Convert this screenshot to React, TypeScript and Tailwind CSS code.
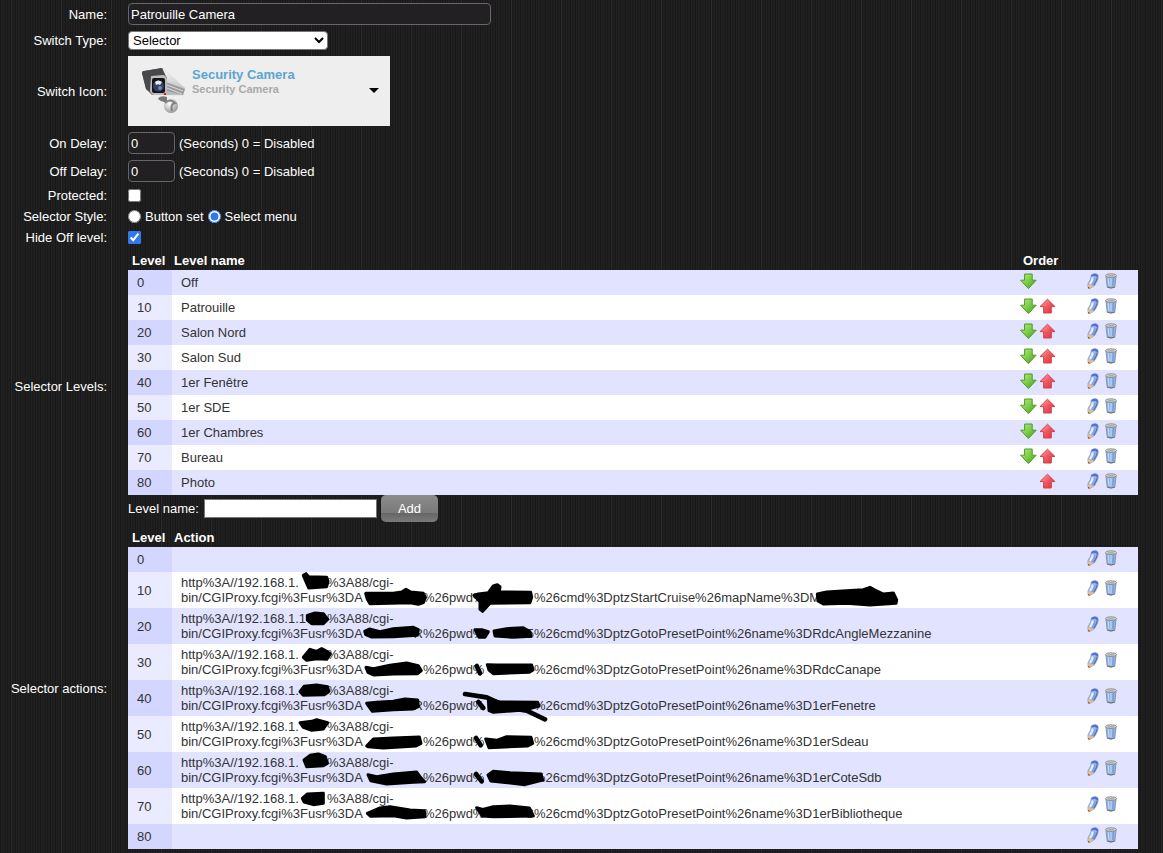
import React, { useState } from 'react';

type Blot = { points?: string; line?: string; width?: number };
type Action = { level: number; octet?: string; user?: string; pass?: string; preset?: string; command?: string; blots?: Blot[] };

const levels = ['Off', 'Patrouille', 'Salon Nord', 'Salon Sud', '1er Fenêtre', '1er SDE', '1er Chambres', 'Bureau', 'Photo'];

const GOTO = '%26cmd%3DptzGotoPresetPoint%26name%3D';

// Marker strokes that hide credentials, in thirds of a pixel from the cell's corner.
const actions: Action[] = [
  { level: 0 },
  {
    level: 10,
    command: '%26cmd%3DptzStartCruise%26mapName%3DM',
    blots: [
      { points: '430,10 438,5 446,14 500,16 504,28 500,44 446,48 440,34' },
      { points: '617,64 700,64 725,60 738,52 752,60 790,64 796,76 790,92 775,97 750,92 630,95 622,82' },
      { points: '942,70 955,66 985,62 1000,42 1012,38 1020,44 1018,60 1112,61 1115,76 1110,92 990,94 968,118 960,112 960,90' },
      { points: '1972,66 2000,60 2060,56 2110,53 2130,46 2145,54 2170,66 2200,63 2210,84 2208,94 2130,99 2060,94 1990,96 1974,87' },
    ],
  },
  {
    level: 20,
    octet: '1',
    user: 'R',
    pass: '5',
    command: GOTO + 'RdcAngleMezzanine',
    blots: [
      { points: '442,22 465,15 490,17 503,34 490,47 455,47 442,36' },
      { points: '614,70 628,63 660,71 700,62 760,58 775,65 772,82 700,86 635,87 617,80' },
      { points: '945,65 965,65 985,71 975,88 957,88' },
      { points: '1002,69 1040,62 1090,59 1110,71 1112,85 1060,88 1005,84' },
    ],
  },
  {
    level: 30,
    command: GOTO + 'RdcCanape',
    blots: [
      { points: '430,40 450,16 470,22 485,14 500,22 511,30 500,46 470,44 440,49' },
      { points: '618,70 640,74 690,64 740,57 775,65 784,80 773,89 700,90 640,93 624,85' },
      { line: 'M950 66 L960 88', width: 14 },
      { points: '982,62 1010,63 1115,63 1119,78 1108,85 1000,89 987,78' },
    ],
  },
  {
    level: 40,
    user: 'R',
    command: GOTO + '1erFenetre',
    blots: [
      { points: '420,35 432,19 470,15 503,20 506,35 493,44 430,46' },
      { points: '620,70 650,67 700,64 735,57 773,60 775,80 760,87 700,89 637,94' },
      { line: 'M915 42 L980 52 L1050 84 L1100 92 L1155 118', width: 14 },
      { line: 'M955 66 L970 84', width: 14 },
      { points: '985,58 1020,66 1133,67 1137,78 1100,89 1000,97 987,92' },
    ],
  },
  {
    level: 50,
    command: GOTO + '1erSdeau',
    blots: [
      { points: '420,20 455,16 470,11 503,20 490,39 455,43 430,34' },
      { points: '620,90 640,69 700,66 778,63 783,82 768,90 670,96 624,92' },
      { line: 'M948 66 L962 88', width: 14 },
      { points: '977,69 1010,73 1040,62 1113,64 1118,82 1103,90 987,95' },
    ],
  },
  {
    level: 60,
    command: GOTO + '1erCoteSdb',
    blots: [
      { points: '432,24 450,10 475,6 496,14 502,34 490,41 440,44' },
      { points: '624,68 650,74 700,66 770,60 780,74 794,89 760,91 680,96 632,86' },
      { line: 'M948 66 L965 88', width: 14 },
      { points: '984,69 1000,58 1050,62 1143,66 1148,84 1095,98 992,87' },
    ],
  },
  {
    level: 70,
    pass: 'S',
    command: GOTO + '1erBibliotheque',
    blots: [
      { points: '427,31 442,18 490,16 490,46 460,50 432,42' },
      { points: '622,76 660,60 690,56 750,66 793,68 795,86 740,90 700,83 632,85' },
      { points: '950,59 968,64 1000,56 1050,54 1108,60 1120,84 1000,86 967,84' },
    ],
  },
  { level: 80 },
];

function ArrowIcon({ up }: { up?: boolean }) {
  return (
    <svg width="17" height="17" viewBox="0 0 17 17" aria-hidden="true" className="block">
      <defs>
        <linearGradient id={up ? 'gu' : 'gd'} x1="0" y1="0" x2="1" y2="1">
          <stop offset="0" stopColor={up ? '#ffb0b0' : '#b9ec8c'} />
          <stop offset="0.5" stopColor={up ? '#f2565f' : '#7ccc44'} />
          <stop offset="1" stopColor={up ? '#dd2f3a' : '#3f9c1e'} />
        </linearGradient>
      </defs>
      {up ? (
        <path d="M8.5 1.2 L16 8.6 H12.3 V15 H4.6 V8.6 H1 Z" fill="url(#gu)" stroke="#c9474d" strokeLinejoin="round" />
      ) : (
        <path d="M4.6 1 H12.2 V7.2 H16.2 L8.4 15.6 L0.6 7.2 H4.6 Z" fill="url(#gd)" stroke="#4d9a2c" strokeLinejoin="round" />
      )}
    </svg>
  );
}

function PencilIcon() {
  return (
    <svg width="12" height="16" viewBox="0 0 12 16" aria-hidden="true" className="block">
      <path d="M4.4 2 Q6 .5 9 .8 Q11.4 1.4 11.2 4.4 L10.6 7 L7.6 12.6 L3 15.4 L1 14.8 L1 10.6 L3.6 6 Z" fill="#9db6e6" stroke="#8394bd" strokeWidth=".7" />
      <path d="M4.4 2 Q6 .5 9 .8 Q11.4 1.4 11.2 4.4 L9.6 4.2 Q9 2.4 4.2 3.6 Z" fill="#4f72dc" />
      <path d="M5.8 4.6 L5 7.6 L3 11" stroke="#e6efff" strokeWidth="2" fill="none" />
      <path d="M8 4.8 L7.4 8 L5 12" stroke="#7f9fdd" strokeWidth="1.4" fill="none" />
      <path d="M10.2 4.6 L9.4 7.6 L6.8 12.2" stroke="#5273c0" strokeWidth="1.2" fill="none" />
      <path d="M1 11.2 L3.6 11.4 L6.6 13.2 L3 15.4 L1 14.8 Z" fill="#e3bd8a" />
      <path d="M1 13.8 L3.2 15.3 L1.2 15.6 Z" fill="#6a4a30" />
    </svg>
  );
}

function TrashIcon() {
  return (
    <svg width="12" height="16" viewBox="0 0 12 16" aria-hidden="true" className="block">
      <path d="M.9 2.6 H11.1 L9.8 14.2 Q6 15.8 2.2 14.2 Z" fill="#8fb2e4" stroke="#8190a8" strokeWidth=".9" />
      <path d="M3.2 5 L4 13 M6 5 V13.4" stroke="#c7dbf6" strokeWidth="1" />
      <path d="M8.4 5 L7.9 13" stroke="#6f98d6" strokeWidth="1" />
      <path d="M2.4 14.2 Q6 15.8 9.6 14.2" stroke="#74716c" fill="none" />
      <ellipse cx="6" cy="2.6" rx="5.5" ry="1.8" fill="#dcdcd6" stroke="#83857f" strokeWidth=".9" />
      <ellipse cx="6" cy="2.8" rx="3.6" ry=".7" fill="#a2abb3" />
    </svg>
  );
}

function CameraIcon() {
  return (
    <svg width="48" height="48" viewBox="0 0 48 48" aria-hidden="true" className="block shrink-0">
      <defs>
        <linearGradient id="hood" x1="0" y1="0" x2="1" y2="1">
          <stop offset="0" stopColor="#4a4a4c" />
          <stop offset="1" stopColor="#929294" />
        </linearGradient>
        <linearGradient id="body" x1="0" y1="0" x2="0" y2="1">
          <stop offset="0" stopColor="#fbfbfb" />
          <stop offset="1" stopColor="#b4b4b6" />
        </linearGradient>
        <radialGradient id="ball" cx=".4" cy=".35" r=".75">
          <stop offset="0" stopColor="#fff" />
          <stop offset="1" stopColor="#8a8a8c" />
        </radialGradient>
      </defs>
      <path d="M22 2 L45 22 L43 29 L25 29 Z" fill="url(#body)" stroke="#d4d4d6" strokeWidth=".6" />
      <path d="M26 16 L45 23 L43 29 L27 25 Z" fill="#9c9c9f" />
      <path d="M27 19 L43 25 M27 22 L42 28" stroke="#dddddf" strokeWidth="1" />
      <path d="M2 7 Q2 5 4 5 L22 2 L27 12 L27 29 L12 29 L6 23 Z" fill="url(#hood)" />
      <path d="M2 7 Q2 5 4 5 L22 2 L25 9 L12 11 L10 26 L6 23 Z" fill="#48484a" />
      <path d="M11 10 L24 9 L27 13 L27 29 L13 29 L10 25 Z" fill="#bcbcbf" />
      <rect x="12" y="12" width="13" height="15" rx="2" fill="#151517" />
      <circle cx="18.500" cy="20" r="5.500" fill="#32435f" />
      <path d="M15 16 Q18 13 22 16 L20 19 Q18 17.500 16 19 Z" fill="#e8ebee" />
      <circle cx="20" cy="22" r="2" fill="#6f86b4" />
      <rect x="24" y="27" width="2" height="2" fill="#e21c1c" />
      <path d="M18 33 Q20 29 27 31 L27 36 Q22 37 18 33 Z" fill="#77777a" />
      <circle cx="31" cy="40" r="7" fill="url(#ball)" />
      <path d="M25 37 Q30 32 35 37 Q30 38 32 45" stroke="#828285" strokeWidth="2" fill="none" />
    </svg>
  );
}

function Row({ label, htmlFor, height, children }: { label: string; htmlFor?: string; height: string; children: React.ReactNode }) {
  return (
    <div className={`flex items-center gap-[21px] ${height}`}>
      <label htmlFor={htmlFor} className="w-[107px] shrink-0 text-right">
        {label}
      </label>
      <div className="flex min-w-0 flex-1 items-center gap-1">{children}</div>
    </div>
  );
}

function EditButtons() {
  return (
    <div className="flex items-center gap-[6px] pb-1">
      <button type="button" aria-label="Edit"><PencilIcon /></button>
      <button type="button" aria-label="Delete"><TrashIcon /></button>
    </div>
  );
}

const head = 'h-[19px] p-0 text-left font-bold text-white';
const tone = (i: number) => (i % 2 === 0 ? 'bg-[#e2e4ff]' : 'bg-white');
const levelTone = (i: number) => (i % 2 === 0 ? 'bg-[#d3d6ff]' : 'bg-[#eaebff]');
const field = 'rounded-[4px] border border-[#666] bg-[#222022] px-[2px] text-white';
const tick = 'size-[13px] accent-[#2f78f0]';

export default function App() {
  const [name, setName] = useState('Patrouille Camera');
  const [onDelay, setOnDelay] = useState('0');
  const [offDelay, setOffDelay] = useState('0');
  const [levelName, setLevelName] = useState('');

  return (
    <main className="min-h-screen bg-[#1c1b1c] bg-[repeating-linear-gradient(90deg,transparent_0_11px,#2b2b2b_11px_12px,transparent_12px_50px),repeating-linear-gradient(90deg,#181818_0_1px,#232223_1px_2px,#1a1a1a_2px_3px,#201f20_3px_5px)] font-['Liberation_Sans',Arial,sans-serif] text-[13px] leading-[15px] text-white">
      <Row label="Name:" htmlFor="name" height="h-7">
        <input id="name" value={name} onChange={(e) => setName(e.target.value)} className={`h-[22px] w-[363px] ${field}`} />
      </Row>
      <Row label="Switch Type:" htmlFor="type" height="h-[25px]">
        <select id="type" className="h-[19px] w-[200px] rounded-[4px] border border-[#767676] bg-white text-black">
          <option>Selector</option>
        </select>
      </Row>
      <Row label="Switch Icon:" htmlFor="icon" height="h-[76px]">
        <button id="icon" type="button" className="flex h-[70px] w-[262px] items-start bg-[#eeeeee] pt-[10px] pr-[11px] pl-3 text-left">
          <CameraIcon />
          <span className="flex flex-1 flex-col pt-[1px] pl-1 font-bold">
            <span className="text-[#5ba5d2]">Security Camera</span>
            <span className="text-[11px] leading-[14px] text-[#aaaaaa]">Security Camera</span>
          </span>
          <svg width="10" height="5" viewBox="0 0 10 5" aria-hidden="true" className="mt-[22px]">
            <path d="M0 0 H10 L5 5 Z" fill="#000" />
          </svg>
        </button>
      </Row>
      <Row label="On Delay:" htmlFor="on" height="h-7">
        <input id="on" value={onDelay} onChange={(e) => setOnDelay(e.target.value)} className={`h-[22px] w-[47px] ${field}`} />
        <span>(Seconds) 0 = Disabled</span>
      </Row>
      <Row label="Off Delay:" htmlFor="off" height="h-7">
        <input id="off" value={offDelay} onChange={(e) => setOffDelay(e.target.value)} className={`h-[22px] w-[47px] ${field}`} />
        <span>(Seconds) 0 = Disabled</span>
      </Row>
      <Row label="Protected:" htmlFor="protected" height="h-[21px]">
        <input id="protected" type="checkbox" className={tick} />
      </Row>
      <Row label="Selector Style:" htmlFor="set" height="h-[21px]">
        <input id="set" type="radio" name="style" className={tick} />
        <label htmlFor="set">Button set</label>
        <input id="menu" type="radio" name="style" defaultChecked className={tick} />
        <label htmlFor="menu">Select menu</label>
      </Row>
      <Row label="Hide Off level:" htmlFor="hide" height="h-[21px]">
        <input id="hide" type="checkbox" defaultChecked className={tick} />
      </Row>

      <section className="flex items-center gap-[21px] pt-[3px] pr-[25px]">
        <h2 className="w-[107px] shrink-0 text-right">Selector Levels:</h2>
        <div className="min-w-0 flex-1">
          <table className="w-full table-fixed border-collapse text-[#333]">
            <thead>
              <tr>
                <th className={`w-11 ${head}`}><span className="pl-1">Level</span></th>
                <th className={head}><span className="pl-[2px]">Level name</span></th>
                <th className={`w-[67px] ${head}`}><span className="pl-[3px]">Order</span></th>
                <th className={`w-[51px] ${head}`} aria-label="Edit" />
              </tr>
            </thead>
            <tbody>
              {levels.map((level, i) => (
                <tr key={level} className={`h-[25px] ${tone(i)}`}>
                  <td className={`py-0 pl-[9px] ${levelTone(i)}`}>{i * 10}</td>
                  <td className="py-0 pl-[9px]">{level}</td>
                  <td className="p-0">
                    <div className="flex gap-[2px] pb-[2px]">
                      {i < levels.length - 1 ? (
                        <button type="button" aria-label="Move down"><ArrowIcon /></button>
                      ) : (
                        <span className="w-[17px]" />
                      )}
                      {i > 0 && <button type="button" aria-label="Move up"><ArrowIcon up /></button>}
                    </div>
                  </td>
                  <td className="p-0"><EditButtons /></td>
                </tr>
              ))}
            </tbody>
          </table>
          <div className="flex h-[27px] items-center gap-1">
            <label htmlFor="level-name" className="w-[72px]">Level name:</label>
            <input id="level-name" value={levelName} onChange={(e) => setLevelName(e.target.value)} className="h-[19px] w-[173px] border border-[#767676] bg-white px-1 text-black" />
            <button type="button" className="h-[27px] w-[57px] rounded-[5px] bg-[linear-gradient(#8c8c8c_0%,#7a7a7a_65%,#656565_66%,#7a7a7a_100%)] text-white">Add</button>
          </div>
        </div>
      </section>

      <section className="flex items-center gap-[21px] pt-[6px] pr-[25px]">
        <h2 className="w-[107px] shrink-0 text-right">Selector actions:</h2>
        <div className="min-w-0 flex-1">
          <table className="w-full table-fixed border-collapse text-[#333]">
            <thead>
              <tr>
                <th className={`w-11 ${head}`}><span className="pl-1">Level</span></th>
                <th className={head}><span className="pl-[2px]">Action</span></th>
                <th className={`w-[51px] ${head}`} aria-label="Edit" />
              </tr>
            </thead>
            <tbody>
              {actions.map((a, i) => (
                <tr key={a.level} className={`${a.command ? 'h-9' : 'h-[25px]'} ${tone(i)}`}>
                  <td className={`py-0 pl-[9px] ${levelTone(i)}`}>{a.level}</td>
                  <td className="relative py-0 pl-[9px] whitespace-nowrap">
                    {a.command && (
                      <>
                        <div className="flex">
                          <span className="w-[146px]">http%3A//192.168.1.{a.octet}</span>
                          <span>%3A88/cgi-</span>
                        </div>
                        <div className="flex">
                          <span className="flex w-[242px] justify-between">
                            <span>bin/CGIProxy.fcgi%3Fusr%3DA</span>
                            <span>{a.user}</span>
                          </span>
                          <span className="flex w-[111px] justify-between">
                            <span>%26pwd%</span>
                            <span>{a.pass}</span>
                          </span>
                          <span>{a.command}</span>
                        </div>
                        <svg viewBox="36 0 2400 108" width="800" height="36" aria-hidden="true" className="pointer-events-none absolute top-0 left-0 z-10 overflow-visible">
                          {a.blots?.map((b, k) =>
                            b.points ? (
                              <polygon key={k} points={b.points} fill="#000" stroke="#000" strokeWidth="9" strokeLinejoin="round" />
                            ) : (
                              <path key={k} d={b.line} fill="none" stroke="#000" strokeWidth={b.width} strokeLinecap="round" strokeLinejoin="round" />
                            ),
                          )}
                        </svg>
                      </>
                    )}
                  </td>
                  <td className="p-0"><EditButtons /></td>
                </tr>
              ))}
            </tbody>
          </table>
        </div>
      </section>
    </main>
  );
}
